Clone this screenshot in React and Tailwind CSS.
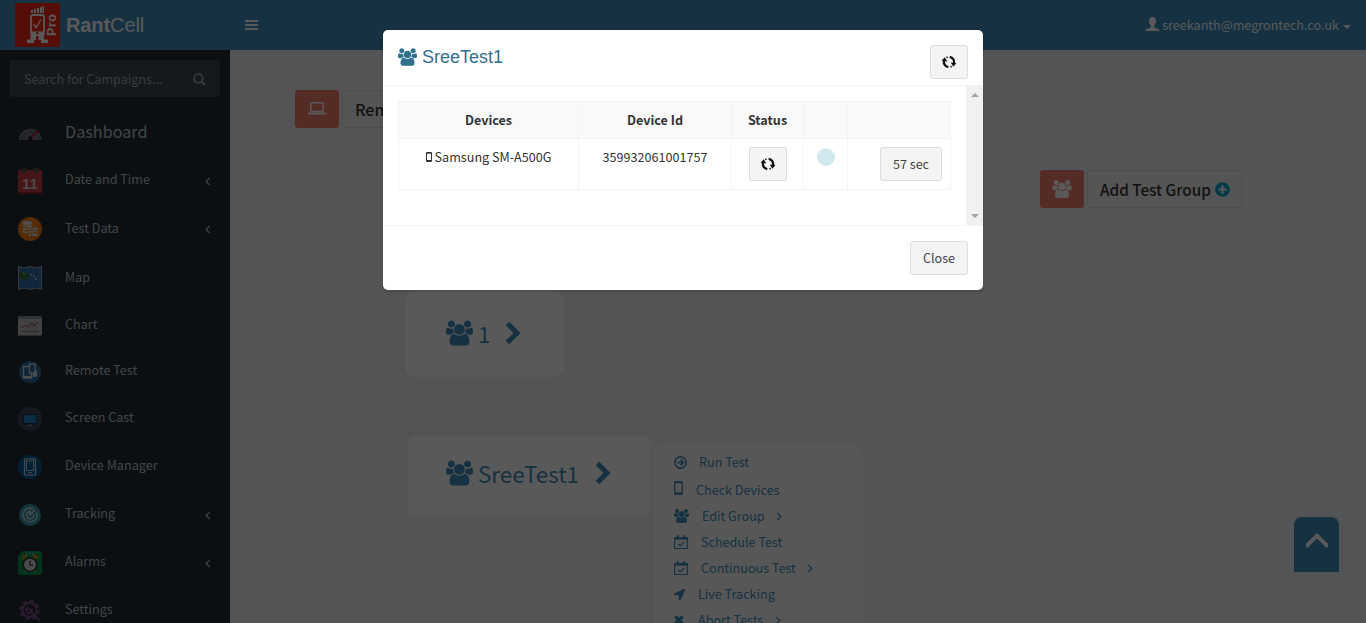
import React from "react";
import { FaPlusCircle, FaLocationArrow } from "react-icons/fa";

const usersPath =
  "M593 896q-162 5-265 128h-134q-82 0-138-40.5t-56-118.5q0-353 124-353 6 0 43.5 21t97.5 42.5 119 21.5q67 0 133-23-5 37-5 66 0 139 81 256zm1071 637q0 120-73 189.5t-194 69.5h-874q-121 0-194-69.5t-73-189.5q0-53 3.5-103.5t14-109 26.5-108.5 43-97.5 62-81 85.5-53.5 111.5-20q10 0 43 21.5t73 48 107 48 135 21.5 135-21.5 107-48 73-48 43-21.5q61 0 111.5 20t85.5 53.5 62 81 43 97.5 26.5 108.5 14 109 3.5 103.5zm-1024-1277q0 106-75 181t-181 75-181-75-75-181 75-181 181-75 181 75 75 181zm704 384q0 159-112.5 271.5t-271.5 112.5-271.5-112.5-112.5-271.5 112.5-271.5 271.5-112.5 271.5 112.5 112.5 271.5zm576 225q0 78-56 118.5t-138 40.5h-134q-103-123-265-128 81-117 81-256 0-29-5-66 66 23 133 23 59 0 119-21.5t97.5-42.5 43.5-21q124 0 124 353zm-128-609q0 106-75 181t-181 75-181-75-75-181 75-181 181-75 181 75 75 181z";

function Users({ className }) {
  return (
    <svg viewBox="0 0 1920 1792" className={className} fill="currentColor">
      <path d={usersPath} />
    </svg>
  );
}

function Angle({ className, left }) {
  return (
    <svg viewBox="0 0 6 10" className={className} fill="none" stroke="currentColor" strokeWidth="1.4">
      <path d={left ? "M5 1L1 5l4 4" : "M1 1l4 4-4 4"} />
    </svg>
  );
}

function BigChevron() {
  return (
    <svg viewBox="0 0 16 24" className="h-6 w-4 shrink-0" fill="none" stroke="currentColor" strokeWidth="5">
      <path d="M2.500 2.500L12 12l-9.500 9.500" />
    </svg>
  );
}

function RefreshIcon() {
  return (
    <svg viewBox="0 0 16 14" className="h-[14px] w-4" fill="none" stroke="#111" strokeWidth="2.300">
      <path d="M7.300 12.200A5.200 5.200 0 0 1 3.200 5.200M8.700 1.800A5.200 5.200 0 0 1 12.800 8.800" />
      <path d="M5.300 2.600l1.200-.6M10.700 11.400l-1.200.6" strokeWidth="1.600" />
      <path d="M.5 5.700L3.700 2.200l2.600 4.200zM9.700 7.600l5.800.7-3.200 3.500z" fill="#111" stroke="none" />
    </svg>
  );
}

function Logo() {
  return (
    <svg viewBox="0 0 45 44" className="h-11 w-[45px]">
      <rect width="45" height="44" fill="#f02a14" />
      <g fill="#fff">
        <path d="M16 7h2v3h-2zM19 6h2v4h-2zM22 5h2v5h-2zM25 4h2v6h-2zM27.500 3h1.500v7h-1.500z" />
        <path d="M15.500 32h5.500v5h-2v3h-7v-3.500h3.500zM23.500 32H29v4.500h4V40h-7v-3h-2.500z" />
      </g>
      <rect x="16" y="12" width="13" height="20" rx="2" fill="none" stroke="#fff" strokeWidth="1.800" />
      <path d="M16 28.500h13v4H16z" fill="#fff" />
      <circle cx="22.500" cy="30.300" r="1.200" fill="#f02a14" />
      <path d="M18.500 21l2.500 3.500L26 16.500" stroke="#fff" strokeWidth="1.300" fill="none" />
      <text
        transform="translate(41.300 33) rotate(-90)"
        fill="#fff"
        fontFamily="Liberation Sans, sans-serif"
        fontWeight="bold"
        fontSize="12.500"
        textLength="22"
      >
        Pro
      </text>
    </svg>
  );
}

const icons = {
  dash: (
    <>
      <path d="M1 19a11.300 11.300 0 0 1 22.600 0z" fill="#6d7478" />
      <path d="M4 19a8.500 8.500 0 0 1 17 0" stroke="#4a4f52" strokeWidth="1" fill="none" />
      <path d="M12 17.500L19.500 10" stroke="#a52046" strokeWidth="2.500" />
      <circle cx="12.300" cy="17.500" r="2.200" fill="#222" />
    </>
  ),
  date: (
    <>
      <rect y="1" width="24" height="24" fill="#c83c46" />
      <rect y="23" width="24" height="2" fill="#8d2730" />
      <rect x="3" y="-1" width="6" height="5" rx="2" fill="#555" />
      <rect x="15" y="-1" width="6" height="5" rx="2" fill="#555" />
      <text x="12" y="19.500" textAnchor="middle" fontFamily="Liberation Sans, sans-serif" fontWeight="bold" fontSize="15" fill="#d9d0d0">
        11
      </text>
    </>
  ),
  data: (
    <>
      <circle cx="12" cy="12" r="12" fill="#f57c0a" />
      <ellipse cx="9.500" cy="6" rx="5" ry="1.900" fill="#ddd" />
      <path d="M4.500 8.200q5 2.400 10 0M4.500 11.200q3 1.500 6 1M4.500 14.200q3 1.500 5 1" stroke="#ddd" strokeWidth="1.700" fill="none" />
      <path d="M10.500 10.500h9v8.500h-9z" fill="#ddd" />
      <path d="M10 13.300h10M10 16.200h10M14 10.500v2.800M16.500 13.300v3M13.500 16.200V19" stroke="#f57c0a" strokeWidth="1" />
    </>
  ),
  map: (
    <>
      <path d="M.5.5L6 2l6-1.500L18 2l5.500-1.500v23L18 22l-6 1.500L6 22 .5 23.500z" fill="#3671b0" stroke="#8fa8bd" strokeWidth="1" />
      <path d="M6 2v20M18 2v20" stroke="#2a5b92" strokeWidth="1" />
      <path d="M1 7l4-2 4 2 3 3-3 3-4 1-4-3z" fill="#2b6f30" />
      <path d="M5 7l3 2M12 8l3 1 2 3 2 3" stroke="#ddd" strokeWidth="1.200" strokeDasharray="2 1.500" fill="none" />
    </>
  ),
  chart: (
    <>
      <rect y="2.500" width="24" height="19" fill="#bdbdbd" />
      <rect y="2.500" width="24" height="2.500" fill="#8d9696" />
      <path d="M12.500 8v9M16 8v9M19 8v9" stroke="#999" strokeWidth=".7" />
      <path d="M3 14l4-3 3 2 4-4 2 3 4-3.500" stroke="#9a6378" strokeWidth="1.100" fill="none" />
      <path d="M3 17.500h18" stroke="#888" strokeWidth="1.600" />
    </>
  ),
  remote: (
    <>
      <circle cx="12" cy="12" r="11" fill="#2b6ca3" />
      <rect x="5.500" y="6.500" width="8" height="11.500" fill="#2b6ca3" stroke="#d6dde2" strokeWidth="1.400" />
      <rect x="11.500" y="4" width="5.500" height="9" fill="#2b6ca3" stroke="#d6dde2" strokeWidth="1.200" />
      <path d="M5 17h9M16 12v5M18 10.500v6" stroke="#d6dde2" strokeWidth="2" />
    </>
  ),
  cast: (
    <>
      <circle cx="12" cy="12" r="12" fill="#3f4561" />
      <rect x="5" y="7" width="14" height="10.500" rx="1" fill="#1f2d3c" />
      <rect x="6" y="8" width="12" height="8" fill="#1882b8" />
      <path d="M10 18.300h4" stroke="#999" strokeWidth="1.200" />
    </>
  ),
  device: (
    <>
      <circle cx="12" cy="12" r="12" fill="#045c9c" />
      <rect x="6.500" y="4" width="11" height="16" rx="1" fill="none" stroke="#d5dde3" strokeWidth="1.200" />
      <rect x="8.500" y="6" width="7" height="9.500" fill="none" stroke="#d5dde3" strokeWidth=".9" />
      <path d="M10 17.700h4" stroke="#d5dde3" strokeWidth="1" />
    </>
  ),
  track: (
    <>
      <circle cx="12" cy="12" r="11" fill="#3795a5" />
      <path d="M15 5.600A7 7 0 1 0 18.400 9" stroke="#cfdcdf" strokeWidth="1.300" fill="none" />
      <path d="M12 8.500A3.600 3.600 0 1 0 15.500 11M12 5v7l5-5.500" stroke="#cfdcdf" strokeWidth="1.300" fill="none" />
    </>
  ),
  alarm: (
    <>
      <path d="M5 0h16a3 3 0 0 1 3 3v18a3 3 0 0 1-3 3H3a3 3 0 0 1-3-3V5z" fill="#07944f" />
      <path d="M5 8a4 4 0 0 1 4-3M19 8a4 4 0 0 0-4-3" stroke="#c8891c" strokeWidth="2.800" fill="none" />
      <path d="M12 1v3M8.500 1.500l1 2.500M15.500 1.500l-1 2.500M8 20l-1 2M16 20l1 2" stroke="#a9c7b4" strokeWidth=".9" />
      <circle cx="12" cy="13.700" r="6.800" fill="#d4d4d4" stroke="#303840" strokeWidth="1.600" />
      <path d="M12 9.500v4.700h3" stroke="#303840" strokeWidth="1.200" fill="none" />
    </>
  ),
  settings: (
    <>
      <circle cx="11.500" cy="11" r="8.600" fill="none" stroke="#7b4c86" strokeWidth="3.200" strokeDasharray="3.800 2.955" />
      <circle cx="11.500" cy="11" r="7" fill="none" stroke="#7b4c86" strokeWidth="2" />
      <path d="M9.500 8.500a3 3 0 1 0 4.500 2l-1.700.8-1.300-1.300zM13 13l8.500 8.500" stroke="#7b4c86" strokeWidth="2" fill="none" />
    </>
  ),
};

const nav = [
  { icon: "dash", label: "Dashboard", h: "h-12", big: true },
  { icon: "date", label: "Date and Time", h: "h-12", more: true },
  { icon: "data", label: "Test Data", h: "h-[49px]", more: true },
  { icon: "map", label: "Map", h: "h-[49px]" },
  { icon: "chart", label: "Chart", h: "h-[46px]" },
  { icon: "remote", label: "Remote Test", h: "h-[46px]" },
  { icon: "cast", label: "Screen Cast", h: "h-12" },
  { icon: "device", label: "Device Manager", h: "h-12" },
  { icon: "track", label: "Tracking", h: "h-12", more: true },
  { icon: "alarm", label: "Alarms", h: "h-12", more: true },
  { icon: "settings", label: "Settings", h: "h-12" },
];

function Sidebar() {
  return (
    <aside className="h-[573px] w-[230px] shrink-0 overflow-hidden bg-[#222d32] pt-[10px] text-[#b8c7ce]">
      <div className="mx-[10px] flex h-[37px] items-center justify-between rounded-[3px] bg-[#374850] pr-[14px] pl-[14px] text-[12.600px] text-[#a9a9a9]">
        <span className="leading-5">Search for Campaigns...</span>
        <svg viewBox="0 0 13 13" className="mt-px h-[13px] w-[13px]" fill="none" stroke="#999" strokeWidth="2">
          <circle cx="5.400" cy="5.400" r="4.300" />
          <path d="M8.500 8.500l3.800 3.800" />
        </svg>
      </div>
      <nav className="pt-[10px]">
        {nav.map((n) => (
          <div key={n.label} className={`flex items-center pr-[19px] pl-[18px] ${n.h}`}>
            <svg viewBox="0 0 24 24" className="mt-[3px] h-6 w-6 shrink-0 overflow-visible">
              {icons[n.icon]}
            </svg>
            <span className={`ml-[23px] flex-1 leading-5 ${n.big ? "text-[16.200px]" : "text-[12.600px]"}`}>{n.label}</span>
            {n.more && <Angle left className="mt-[4px] h-[9px] w-[6px]" />}
          </div>
        ))}
      </nav>
    </aside>
  );
}

function CalendarCheck() {
  return (
    <svg viewBox="0 0 14 14" className="h-[14px] w-[14px]" fill="none" stroke="currentColor">
      <path d="M.6 2.500h12.800v11H.6z" strokeWidth="1.100" />
      <path d="M.6 3.500h12.800" strokeWidth="2.200" />
      <path d="M3.800.3v3M10.200.3v3" strokeWidth="2" />
      <path d="M4.200 9l2 2 3.800-3.800" strokeWidth="1.200" />
    </svg>
  );
}

const menu = [
  {
    label: "Run Test",
    h: "h-7",
    gap: "gap-[12px]",
    icon: (
      <svg viewBox="0 0 12 12" className="h-[13px] w-[13px]" fill="none" stroke="currentColor">
        <circle cx="6" cy="6" r="5.200" strokeWidth="1.500" />
        <path d="M2.800 6h5M6 3.300L8.700 6 6 8.700" strokeWidth="1.500" />
      </svg>
    ),
  },
  {
    label: "Check Devices",
    h: "h-[27px]",
    gap: "gap-[13px]",
    icon: (
      <svg viewBox="0 0 9 14" className="mb-[3px] h-[14px] w-[9px]" fill="none" stroke="currentColor">
        <rect x=".7" y=".7" width="7.600" height="12.600" rx=".8" strokeWidth="1.300" />
        <path d="M1 1.400h7M1 12h7" strokeWidth="1.600" />
      </svg>
    ),
  },
  { label: "Edit Group", h: "h-[26px]", gap: "gap-[13px]", icon: <Users className="h-[14px] w-[15px]" />, more: true },
  { label: "Schedule Test", h: "h-[26px]", gap: "gap-[13px]", icon: <CalendarCheck /> },
  { label: "Continuous Test", h: "h-[26px]", gap: "gap-[13px]", icon: <CalendarCheck />, more: true },
  { label: "Live Tracking", h: "h-[26px]", gap: "gap-[13px]", icon: <FaLocationArrow className="h-[11px] w-[11px]" /> },
  {
    label: "Abort Tests",
    h: "h-[26px]",
    gap: "gap-[14px]",
    icon: (
      <svg viewBox="0 0 10 10" className="h-[10px] w-[10px]" stroke="currentColor" strokeWidth="3.200">
        <path d="M1.300 1.300l7.400 7.400M8.700 1.300L1.300 8.700" />
      </svg>
    ),
    more: true,
  },
];

function Main() {
  return (
    <main className="h-[573px] min-w-0 flex-1 overflow-hidden bg-[#ecf0f5] pt-5 pl-[30px]">
      <div className="flex h-[80px] w-[1060px] gap-[3px] rounded-[5px] bg-[#f1f0ef] pt-5 pl-[35px]">
        <div className="flex h-[38px] w-11 items-center justify-center rounded-[3px] bg-[#f27c6e]">
          <svg viewBox="0 0 18 13" className="mb-[2px] h-[13px] w-[18px]" fill="none" stroke="#fff">
            <rect x="2.800" y=".8" width="12.400" height="8.700" rx="1" strokeWidth="1.400" />
            <path d="M0 11.500h18" strokeWidth="2" />
          </svg>
        </div>
        <div className="flex h-[38px] w-[150px] items-center rounded-[3px] border border-[#ddd] px-3 pb-px text-[16px] font-medium text-[#333]">
          Remote Test
        </div>
      </div>
      <div className="mt-5 ml-[780px] flex gap-[3px]">
        <div className="flex h-[38px] w-11 items-center justify-center rounded-[3px] bg-[#f27c6e] text-white">
          <Users className="h-[18px] w-5" />
        </div>
        <div className="flex h-[38px] w-[155px] items-center gap-1 rounded-[3px] border border-[#ddd] bg-[#f4f4f4] pl-3 text-[15.300px] font-medium text-[#333]">
          <span className="whitespace-nowrap">Add Test Group</span>
          <FaPlusCircle className="h-[15px] w-[15px] shrink-0 text-[#00a7d0]" />
        </div>
      </div>
      <div className="mt-[82px] ml-[145px] flex h-[87px] w-[159px] items-center rounded-[10px] bg-white pb-[2px] pl-[41px] text-[#3c8dbc]">
        <Users className="h-[26px] w-[27px] shrink-0" />
        <span className="ml-[5px] text-[22.300px] leading-8">1</span>
        <span className="ml-[15px]"><BigChevron /></span>
      </div>
      <div className="mt-[53px] ml-[145px] flex items-start text-[#3c8dbc]">
        <div className="flex h-[87px] w-[248px] shrink-0 items-center rounded-[10px] border border-[#f4f4f4] bg-white pb-[2px] pl-[40px] shadow-[inset_0_3px_5px_rgba(0,0,0,0.125)]">
          <Users className="h-[26px] w-[27px] shrink-0" />
          <span className="ml-[5px] text-[22.400px] leading-8">SreeTest1</span>
          <span className="ml-[16px]"><BigChevron /></span>
        </div>
        <div className="mt-[14px] ml-px h-[240px] w-[209px] rounded-[10px] bg-[#f9f9f9] pt-1 pl-5 text-[12.600px]">
          {menu.map((m) => (
            <div key={m.label} className={`flex items-center ${m.h} ${m.gap}`}>
              {m.icon}
              <span className="leading-5">{m.label}</span>
              {m.more && <Angle className="-ml-[2px] h-[9px] w-[6px]" />}
            </div>
          ))}
        </div>
      </div>
    </main>
  );
}

const btn =
  "flex h-[34px] items-center justify-center rounded-[3px] border border-[#ddd] bg-[#f4f4f4] text-[12.600px] text-[#444]";

function Modal() {
  return (
    <div className="h-[260px] w-[600px] overflow-hidden rounded-[5px] bg-white text-[#333] shadow-[0_2px_3px_rgba(0,0,0,0.125)]">
      <div className="flex h-[56px] justify-between border-b border-[#f4f4f4] px-[15px] pt-[15px]">
        <div className="flex h-6 items-center gap-[5px] font-['Liberation_Sans',sans-serif] text-[18px] text-[#31708f]">
          <Users className="h-[18px] w-[19px]" />
          <span>SreeTest1</span>
        </div>
        <button className={`${btn} w-[38px]`}><RefreshIcon /></button>
      </div>
      <div className="flex h-[139px]">
        <div className="flex-1 px-[15px] pt-[15px]">
          <table className="w-[553px] table-fixed border-collapse text-center text-[12.600px] leading-5 [&_td]:border [&_td]:border-[#f4f4f4] [&_th]:border [&_th]:border-[#f4f4f4]">
            <colgroup>
              <col className="w-[180px]" />
              <col className="w-[153px]" />
              <col className="w-[72px]" />
              <col className="w-[44px]" />
              <col className="w-[103px]" />
            </colgroup>
            <thead>
              <tr className="h-[37px] bg-[#f9f9f9]">
                <th>Devices</th>
                <th>Device Id</th>
                <th>Status</th>
                <th />
                <th />
              </tr>
            </thead>
            <tbody>
              <tr className="h-[51px] align-top">
                <td className="pt-2">
                  <div className="flex items-center justify-center gap-[3px]">
                    <svg viewBox="0 0 6 10" className="h-[10px] w-[6px]" fill="none" stroke="#333">
                      <rect x=".5" y=".5" width="5" height="9" rx=".5" />
                      <path d="M.5 1h5M.5 8.800h5" strokeWidth="1.500" />
                    </svg>
                    <span>Samsung SM-A500G</span>
                  </div>
                </td>
                <td className="pt-2">359932061001757</td>
                <td className="pt-2">
                  <button className={`${btn} mx-auto w-[38px]`}><RefreshIcon /></button>
                </td>
                <td className="pt-[9px]">
                  <div className="mx-auto h-[18px] w-[18px] rounded-full bg-[#d0e9ef]" />
                </td>
                <td className="pt-2 pr-2">
                  <button className={`${btn} ml-auto w-[62px]`}>57 sec</button>
                </td>
              </tr>
            </tbody>
          </table>
        </div>
        <div className="flex w-[17px] flex-col items-center justify-between bg-[#f1f1f1] py-[7px]">
          <svg viewBox="0 0 8 4" className="h-1 w-2" fill="#a3a3a3"><path d="M0 4l4-4 4 4z" /></svg>
          <svg viewBox="0 0 8 4" className="h-1 w-2" fill="#a3a3a3"><path d="M0 0l4 4 4-4z" /></svg>
        </div>
      </div>
      <div className="flex justify-end border-t border-[#f4f4f4] p-[15px]">
        <button className={`${btn} w-[58px]`}>Close</button>
      </div>
    </div>
  );
}

export default function App() {
  return (
    <div className="relative h-[623px] w-[1366px] overflow-hidden font-['Noto_Sans_CJK_SC',sans-serif]">
      <header className="flex h-[50px] items-center bg-[#3c8dbc] pl-[15px] text-white">
        <Logo />
        <div className="ml-[6px] w-[179px] font-['Liberation_Sans',sans-serif] text-[20px] tracking-[-0.100px]">
          <b>Rant</b>Cell
        </div>
        <svg viewBox="0 0 13 10" className="h-[10px] w-[13px]" fill="#fff">
          <path d="M0 0h13v2H0zM0 4h13v2H0zM0 8h13v2H0z" />
        </svg>
        <div className="mr-[15px] ml-auto flex items-center">
          <svg viewBox="0 0 15 14" className="mb-[2px] h-[14px] w-[15px]" fill="#fff">
            <path d="M7.500 0C5 0 4 1.500 4 4c0 2 .7 3.800 1.900 4.700v1.500C4.500 11 .6 11.700.2 14h14.600c-.4-2.300-4.300-3-5.700-3.800V8.700C10.300 7.800 11 6 11 4c0-2.500-1-4-3.500-4z" />
          </svg>
          <span className="ml-[2px] text-[12.600px] leading-5">sreekanth@megrontech.co.uk</span>
          <svg viewBox="0 0 8 4" className="mt-[3px] ml-[4px] h-1 w-2" fill="#fff"><path d="M0 0h8L4 4z" /></svg>
        </div>
      </header>
      <div className="flex">
        <Sidebar />
        <Main />
      </div>
      <button className="absolute top-[517px] left-[1294px] flex h-[55px] w-[45px] justify-center rounded-t-[8px] bg-[#3c8dbc] pt-4">
        <svg viewBox="0 0 22 15" className="h-[15px] w-[22px]" fill="none" stroke="#fff" strokeWidth="4">
          <path d="M0 13.500L11 2.800l11 10.700" />
        </svg>
      </button>
      <div className="absolute inset-0 flex items-start justify-center bg-black/65 pt-[30px]">
        <Modal />
      </div>
    </div>
  );
}
